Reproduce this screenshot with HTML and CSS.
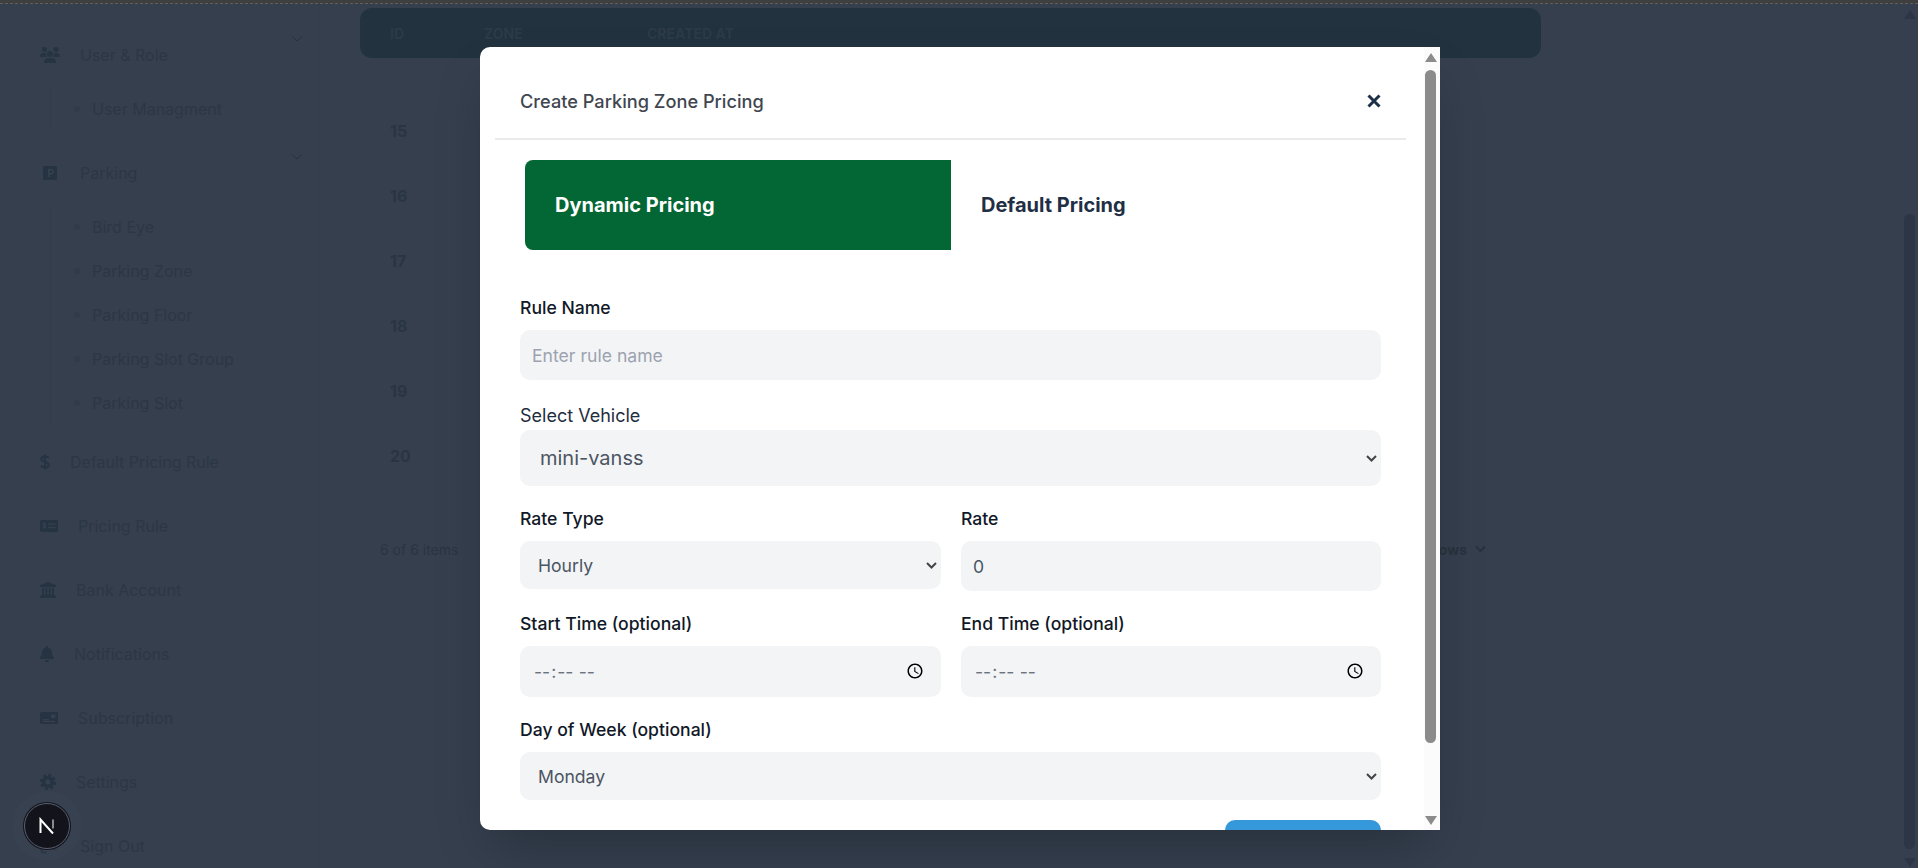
FILE: index.html
```html
<!DOCTYPE html>
<html lang="en">
<head>
<meta charset="utf-8">
<title>Create Parking Zone Pricing</title>
<link rel="stylesheet" href="styles.css">
</head>
<body>
<div class="topstrip"></div>
<div class="app">
  <aside class="sidebar">
    <div class="nav-item nav-parent">
      <svg class="ico" width="20" height="16" viewBox="0 0 640 512"><path d="M144 0a80 80 0 1 1 0 160A80 80 0 1 1 144 0zM512 0a80 80 0 1 1 0 160A80 80 0 1 1 512 0zM0 298.7C0 239.8 47.8 192 106.7 192h42.7c15.9 0 31 3.5 44.6 9.7c-1.3 7.2-1.9 14.7-1.9 22.3c0 38.2 16.8 72.5 43.3 96c-.2 0-.4 0-.7 0H21.3C9.6 320 0 310.4 0 298.7zM405.3 320c-.2 0-.4 0-.7 0c26.6-23.5 43.3-57.8 43.3-96c0-7.6-.7-15-1.9-22.3c13.6-6.3 28.7-9.7 44.6-9.7h42.7C592.2 192 640 239.8 640 298.7c0 11.8-9.6 21.3-21.3 21.3H405.3zM224 224a96 96 0 1 1 192 0 96 96 0 1 1 -192 0zM128 485.3C128 411.7 187.7 352 261.3 352H378.7C452.3 352 512 411.7 512 485.3c0 14.7-11.9 26.7-26.7 26.7H154.7c-14.7 0-26.7-11.9-26.7-26.7z"/></svg>
      <span>User &amp; Role</span>
      <svg class="nav-chev" width="10" height="6" viewBox="0 0 10 6"><path d="M.5.8 5 5 9.500.8"/></svg>
    </div>
    <ul class="sub-list sub-list-first">
      <li class="sub-item">User Managment</li>
    </ul>
    <div class="nav-item nav-parent">
      <svg class="ico" width="20" height="14" viewBox="0 0 20 14"><path fill-rule="evenodd" d="M4.500 0h11A1.500 1.500 0 0 1 17 1.500v11a1.500 1.500 0 0 1-1.500 1.500h-11A1.500 1.500 0 0 1 3 12.500v-11A1.500 1.500 0 0 1 4.500 0zM8 3v8h1.800V8.500h1.400a2.750 2.750 0 0 0 0-5.500zm1.800 1.600h1.300a1.150 1.150 0 0 1 0 2.300H9.800z"/></svg>
      <span>Parking</span>
      <svg class="nav-chev" width="10" height="6" viewBox="0 0 10 6"><path d="M.5.8 5 5 9.500.8"/></svg>
    </div>
    <ul class="sub-list sub-list-second">
      <li class="sub-item">Bird Eye</li>
      <li class="sub-item">Parking Zone</li>
      <li class="sub-item">Parking Floor</li>
      <li class="sub-item">Parking Slot Group</li>
      <li class="sub-item">Parking Slot</li>
    </ul>
    <div class="nav-item">
      <svg class="ico" width="10" height="16" viewBox="0 0 10 16"><path class="stroke-ico" d="M5 .5v15M8.800 4.200C8.300 3 7 2.500 5 2.500 2.700 2.500 1.300 3.500 1.300 5.100c0 3.700 7.500 1.900 7.500 5.800 0 1.600-1.500 2.600-3.800 2.600-2.100 0-3.500-.7-3.900-2"/></svg>
      <span>Default Pricing Rule</span>
    </div>
    <div class="nav-item">
      <svg class="ico" width="18" height="14" viewBox="0 0 18 14"><rect y="1" width="18" height="12" rx="1.800"/><path class="cut" d="M8 5h7.500M8 8.500h7.500M5.700 5C5.400 4.500 5 4.300 4.400 4.300c-.8 0-1.300.4-1.300 1 0 1.300 2.700.7 2.700 2.100 0 .7-.6 1.100-1.400 1.100-.6 0-1.100-.2-1.400-.7M4.400 3.300v7"/></svg>
      <span>Pricing Rule</span>
    </div>
    <div class="nav-item">
      <svg class="ico" width="16" height="16" viewBox="0 0 16 16"><path d="M8 0 16 3.300V5H0V3.300zM0 14h16v2H0zM1 12.800h14V14H1zM2 5.800h2v7H2zM5.300 5.800h2v7h-2zM8.700 5.800h2v7h-2zM12 5.800h2v7h-2z"/></svg>
      <span>Bank Account</span>
    </div>
    <div class="nav-item">
      <svg class="ico" width="14" height="16" viewBox="0 0 448 512"><path d="M224 0c-17.700 0-32 14.300-32 32V51.200C119 66 64 130.600 64 208v18.800c0 47-17.300 92.400-48.500 127.600l-7.400 8.300c-8.400 9.400-10.400 22.900-5.300 34.400S19.400 416 32 416H416c12.600 0 24-7.400 29.200-18.900s3.100-25-5.300-34.400l-7.400-8.300C401.300 319.200 384 273.900 384 226.800V208c0-77.400-55-142-128-156.800V32c0-17.700-14.300-32-32-32zm45.300 493.300c12-12 18.700-28.300 18.700-45.300H224 160c0 17 6.700 33.300 18.700 45.300s28.300 18.700 45.300 18.700s33.300-6.700 45.300-18.700z"/></svg>
      <span>Notifications</span>
    </div>
    <div class="nav-item">
      <svg class="ico" width="18" height="14" viewBox="0 0 18 14"><rect y="1" width="18" height="12" rx="1.800"/><path class="cut" d="M3 8.700h6M3 10.500h12"/><rect class="cut-fill" x="11" y="3.500" width="4.500" height="3.500"/></svg>
      <span>Subscription</span>
    </div>
    <div class="nav-item">
      <svg class="ico" width="16" height="16" viewBox="0 0 16 16"><circle class="gear-ring" cx="8" cy="8" r="4.300"/><circle class="gear-teeth" cx="8" cy="8" r="6.800"/></svg>
      <span>Settings</span>
    </div>
    <div class="nav-item">
      <svg class="ico" width="20" height="16" viewBox="0 0 20 16"><path class="stroke-ico" d="M7 1.500H3.500a2 2 0 0 0-2 2v9a2 2 0 0 0 2 2H7M8 8h9M13.500 4l4 4-4 4"/></svg>
      <span>Sign Out</span>
    </div>
  </aside>

  <main class="main">
    <div class="thead">
      <span class="th th-id">ID</span>
      <span class="th th-zone">Zone</span>
      <span class="th">Created At</span>
    </div>
    <div class="tbody">
      <div class="tr">15</div>
      <div class="tr">16</div>
      <div class="tr">17</div>
      <div class="tr">18</div>
      <div class="tr">19</div>
      <div class="tr">20</div>
    </div>
    <div class="tfoot">
      <span class="items">6 of 6 items</span>
      <span class="rows">10 rows
        <svg width="11" height="8" viewBox="0 0 11 8"><path d="M1 1.500 5.500 6 10 1.500"/></svg>
      </span>
    </div>
  </main>

  <div class="page-bar">
    <span class="arrow-up"></span>
    <div class="page-track"><div class="page-thumb"></div></div>
    <span class="arrow-down"></span>
  </div>
</div>

<section class="modal">
  <div class="modal-body">
    <header class="modal-head">
      <h2 class="modal-title">Create Parking Zone Pricing</h2>
      <svg class="close" width="14" height="14" viewBox="0 0 14 14"><path d="M1.500 1.500l11 11M12.500 1.500l-11 11"/></svg>
    </header>
    <div class="tabs">
      <button class="tab tab-on" type="button">Dynamic Pricing</button>
      <button class="tab" type="button">Default Pricing</button>
    </div>
    <form class="form">
      <div class="field field-name">
        <label class="label">Rule Name</label>
        <input class="control control-name" type="text" placeholder="Enter rule name">
      </div>
      <div class="field field-vehicle">
        <label class="label label-light">Select Vehicle</label>
        <select class="control control-select control-vehicle"><option>mini-vanss</option></select>
      </div>
      <div class="two">
        <div class="field">
          <label class="label">Rate Type</label>
          <select class="control control-select control-sel"><option>Hourly</option></select>
        </div>
        <div class="field">
          <label class="label">Rate</label>
          <input class="control control-rate" type="number" value="0">
        </div>
      </div>
      <div class="two">
        <div class="field">
          <label class="label">Start Time (optional)</label>
          <input class="control control-time" type="time">
        </div>
        <div class="field">
          <label class="label">End Time (optional)</label>
          <input class="control control-time" type="time">
        </div>
      </div>
      <div class="field">
        <label class="label label-day">Day of Week (optional)</label>
        <select class="control control-select control-sel"><option>Monday</option></select>
      </div>
      <div class="actions"><button class="save" type="button" aria-label="Save"></button></div>
    </form>
  </div>
  <div class="modal-bar">
    <span class="arrow-up arrow-modal"></span>
    <div class="modal-track"><div class="modal-thumb"></div></div>
    <span class="arrow-down arrow-modal"></span>
  </div>
</section>

<div class="next-badge">
  <svg width="18" height="18" viewBox="0 0 18 18"><path class="n-main" d="M2.500 16V2.500L15 16.500"/><path class="n-side" d="M15 2.500v9"/></svg>
</div>
</body>
</html>
```
FILE: styles.css
```css
* { box-sizing: border-box; }

html, body {
  margin: 0;
  height: 868px;
  overflow: hidden;
}

body {
  display: flex;
  flex-direction: column;
  background: #353f4e;
  font-family: Inter, "Liberation Sans", sans-serif;
  font-size: 16px;
  color: #2c3745;
}

.topstrip {
  height: 4px;
  flex: none;
  background: #403f3f;
  border-bottom: 1px dashed #5d5f62;
}

.app {
  flex: 1;
  display: flex;
  min-height: 0;
}

/* Sidebar */
.sidebar {
  width: 320px;
  flex: none;
  padding: 19px 0 0 40px;
  border-right: 1px solid #343d4b;
}

.nav-item {
  position: relative;
  height: 64px;
  display: flex;
  align-items: center;
  gap: 20px;
}

.ico { flex: none; fill: #263342; }

.stroke-ico {
  fill: none;
  stroke: #263342;
  stroke-width: 2;
}

.cut { fill: none; stroke: #353f4e; stroke-width: 1.300; }
.cut-fill { fill: #353f4e; }
.gear-ring { fill: none; stroke: #263342; stroke-width: 3.600; }
.gear-teeth { fill: none; stroke: #263342; stroke-width: 2.600; stroke-dasharray: 3 2.340; }

.nav-chev {
  position: absolute;
  left: 252px;
  top: 13px;
  fill: none;
  stroke: #263342;
  stroke-width: 1;
}

.sub-list {
  list-style: none;
  margin: 0 0 0 10px;
  padding: 0;
  border-left: 1px solid #333c4a;
}

.sub-list-first { margin-bottom: 10px; }
.sub-list-second { margin-bottom: 5px; }

.sub-item {
  height: 44px;
  display: flex;
  align-items: center;
  gap: 12px;
  padding-left: 23px;
}

.sub-item::before {
  content: "";
  width: 6px;
  height: 6px;
  border-radius: 50%;
  background: #313b49;
  flex: none;
}

/* Table behind the modal */
.main {
  flex: 1;
  min-width: 0;
  padding: 4px 361px 0 40px;
}

.thead {
  height: 50px;
  display: flex;
  align-items: center;
  padding-left: 30px;
  border-radius: 12px;
  background: #22323f;
}

.th {
  font-size: 14px;
  font-weight: 700;
  text-transform: uppercase;
  color: #2d3a49;
}

.th-id { width: 94px; }
.th-zone { width: 163px; }

.tbody { padding: 40px 0 0 30px; }

.tr {
  height: 65px;
  display: flex;
  align-items: center;
  font-weight: 700;
  color: #2a3543;
}

.tfoot {
  display: flex;
  justify-content: space-between;
  align-items: center;
  height: 20px;
  margin-top: 51px;
  padding: 0 55px 0 20px;
  font-size: 14px;
  color: #2a3543;
}

.rows {
  display: flex;
  align-items: center;
  gap: 8px;
  font-weight: 700;
  color: #27333f;
}

.rows svg { fill: none; stroke: #27333f; stroke-width: 2; }

/* Page scrollbar */
.page-bar {
  width: 16px;
  flex: none;
  display: flex;
  flex-direction: column;
  align-items: center;
  padding: 6px 1px 1px 0;
}

.arrow-up, .arrow-down {
  width: 0;
  height: 0;
  flex: none;
  border-left: 6.500px solid transparent;
  border-right: 6.500px solid transparent;
}

.arrow-up { border-bottom: 9px solid #2c3644; }
.arrow-down { border-top: 9px solid #2c3644; }

.page-track {
  flex: 1;
  width: 11px;
  padding: 195px 0 9px;
}

.page-thumb {
  height: 100%;
  border-radius: 6px;
  background: #2c3644;
}

/* Modal */
.modal {
  position: absolute;
  left: 480px;
  top: 47px;
  width: 960px;
  height: 783px;
  display: flex;
  overflow: hidden;
  border-radius: 10px 0 0 10px;
  background: #fff;
  box-shadow: 0 25px 50px -12px rgba(0, 0, 0, .25);
}

.modal-body {
  flex: 1;
  min-width: 0;
  padding: 0 18px 0 15px;
}

.modal-head {
  height: 93px;
  display: flex;
  align-items: center;
  justify-content: space-between;
  padding: 17px 25px 0;
  border-bottom: 2px solid #e9eaeb;
}

.modal-title {
  margin: 0;
  font-size: 18.200px;
  font-weight: 500;
  color: #3f4650;
}

.close {
  fill: none;
  stroke: #1e3047;
  stroke-width: 3;
}

.tabs {
  display: flex;
  margin: 20px 0 46px 30px;
}

.tab {
  width: 426px;
  height: 90px;
  padding: 0 0 0 30px;
  border: 0;
  background: none;
  text-align: left;
  font: 700 20px Inter, "Liberation Sans", sans-serif;
  color: #1f2f45;
}

.tab-on {
  border-radius: 8px 0 0 8px;
  background: #036635;
  color: #fff;
}

.form {
  margin: 0 25px;
  display: flex;
  flex-direction: column;
  gap: 21px;
}

.field { display: flex; flex-direction: column; }

.field-name { margin-bottom: 3px; }

.label {
  font-size: 17.600px;
  line-height: 24px;
  font-weight: 500;
  color: #111827;
  margin-bottom: 10px;
}

.label-light {
  font-size: 18px;
  font-weight: 400;
  color: #1f2d3d;
  margin-bottom: 2px;
}

.label-day { margin-bottom: 10px; }

.control {
  width: 100%;
  border: 0;
  border-radius: 10px;
  background-color: #f3f4f6;
  font-family: Inter, "Liberation Sans", sans-serif;
  font-size: 17.600px;
  color: #4b5563;
  outline: 0;
}

.control-name { height: 50px; padding: 0 12px; }
.control-name::placeholder { color: #9ca3af; }

.control-select {
  appearance: none;
  background-image: url("data:image/svg+xml,%3Csvg xmlns='http://www.w3.org/2000/svg' width='11' height='7' viewBox='0 0 11 7'%3E%3Cpath d='M1 1l4.500 4.500L10 1' fill='none' stroke='%23444' stroke-width='2'/%3E%3C/svg%3E");
  background-repeat: no-repeat;
  background-position: right 4.500px center;
}

.control-vehicle {
  height: 56px;
  padding: 0 20px;
  font-size: 20px;
}

.control-sel {
  height: 48px;
  padding: 0 18px;
}

.control-rate { height: 50px; padding: 0 13px 0 12px; }

.control-time {
  height: 51px;
  padding: 0 14px 0 13px;
  color: #6b7280;
}

.two {
  display: grid;
  grid-template-columns: 421px 420px;
  gap: 20px;
}

.actions {
  display: flex;
  justify-content: flex-end;
  margin-top: -1px;
}

.save {
  width: 156px;
  height: 50px;
  border: 0;
  border-radius: 10px;
  background: #3498db;
}

/* Modal scrollbar */
.modal-bar {
  width: 16px;
  flex: none;
  display: flex;
  flex-direction: column;
  align-items: center;
  padding: 6px 3px 5px 0;
  background: #fbfbfb;
}

.arrow-modal.arrow-up { border-bottom-color: #8b8b8b; }
.arrow-modal.arrow-down { border-top-color: #8b8b8b; }

.modal-track {
  flex: 1;
  width: 11px;
  padding: 8px 0 73px;
}

.modal-thumb {
  height: 100%;
  border-radius: 6px;
  background: #8b8b8b;
}

/* Next.js dev badge */
.next-badge {
  position: absolute;
  left: 24px;
  top: 803px;
  width: 46px;
  height: 46px;
  display: flex;
  align-items: center;
  justify-content: center;
  border-radius: 50%;
  background: #13131c;
  border: 1px solid #596070;
  box-shadow: 0 0 0 1px #13131c, 0 0 0 12px rgba(60, 68, 82, .3);
}

.next-badge svg { fill: none; stroke-width: 2; }
.n-main { stroke: #fff; }
.n-side { stroke: #8a8a90; }
```
